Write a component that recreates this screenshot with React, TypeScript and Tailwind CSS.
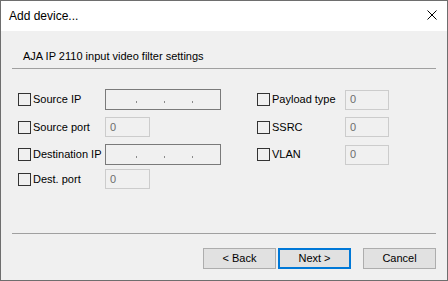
import React from "react";

function Check({ label }: { label: string }) {
  return (
    <div className="flex items-center">
      <div className="w-[13px] h-[13px] border border-[#333333] bg-[#f0f0f0] shrink-0" />
      <span className="ml-[2px] text-[11px] leading-[13px] text-black whitespace-nowrap">{label}</span>
    </div>
  );
}

function NumBox({ w, h = 20 }: { w: number; h?: number }) {
  return (
    <div
      className={`border border-[#cccccc] bg-[#f0f0f0] flex items-center pl-[4px] text-[11px] text-[#6d6d6d] ${
        w === 45 ? "w-[45px]" : "w-[44px]"
      } ${h === 20 ? "h-[20px]" : "h-[21px]"}`}
    >
      0
    </div>
  );
}

function IpBox() {
  return (
    <div className="w-[116px] h-[21px] border border-[#7a7a7a] bg-[#f0f0f0] flex items-start pt-[11px]">
      <div className="ml-[30px] w-px h-[2px] bg-[#8a8a8a]" />
      <div className="ml-[27px] w-px h-[2px] bg-[#8a8a8a]" />
      <div className="ml-[27px] w-px h-[2px] bg-[#8a8a8a]" />
    </div>
  );
}

function Btn({ label, primary }: { label: string; primary?: boolean }) {
  return (
    <div
      className={`w-[73px] h-[21px] bg-[#e1e1e1] flex items-center justify-center text-[11px] text-black ${
        primary ? "border-2 border-[#0078d7]" : "border border-[#adadad]"
      }`}
    >
      {label}
    </div>
  );
}

export default function App() {
  return (
    <div className="w-[448px] h-[281px] border border-[#6e6e6e] flex flex-col font-['Liberation_Sans',Arial,sans-serif] bg-[#f0f0f0] overflow-hidden">
      {/* Title bar */}
      <div className="h-[30px] bg-white flex items-start justify-between shrink-0">
        <span className="mt-[8px] ml-[8px] text-[12px] leading-[14px] text-black">Add device...</span>
        <svg className="mt-[9px] mr-[10px]" width="10" height="10" viewBox="0 0 10 10">
          <path d="M0.5 0.5 L9.5 9.5 M9.5 0.5 L0.5 9.5" stroke="#000" strokeWidth="1" fill="none" />
        </svg>
      </div>

      {/* Content */}
      <div className="flex-1 flex flex-col px-[11px]">
        <div className="h-[37px] pt-[19px] pl-[11px] text-[11px] leading-[13px] text-black">
          AJA IP 2110 input video filter settings
        </div>
        <div className="h-px bg-[#a0a0a0]" />

        <div className="flex flex-col pl-[6px] mt-[20px]">
          {/* Row 1 */}
          <div className="flex items-center h-[21px]">
            <div className="w-[87px]"><Check label="Source IP" /></div>
            <IpBox />
            <div className="ml-[36px] w-[88px]"><Check label="Payload type" /></div>
            <NumBox w={44} />
          </div>
          {/* Row 2 */}
          <div className="flex items-center h-[20px] mt-[7px]">
            <div className="w-[87px]"><Check label="Source port" /></div>
            <NumBox w={45} />
            <div className="ml-[107px] w-[88px]"><Check label="SSRC" /></div>
            <NumBox w={44} />
          </div>
          {/* Row 3 */}
          <div className="flex items-center h-[21px] mt-[7px]">
            <div className="w-[87px]"><Check label="Destination IP" /></div>
            <IpBox />
            <div className="ml-[36px] w-[88px]"><Check label="VLAN" /></div>
            <NumBox w={44} />
          </div>
          {/* Row 4 */}
          <div className="flex items-center h-[20px] mt-[4px]">
            <div className="w-[87px]"><Check label="Dest. port" /></div>
            <NumBox w={45} />
          </div>
        </div>

        <div className="flex-1" />
        <div className="h-px bg-[#a0a0a0]" />
        <div className="flex justify-end mt-[14px] mb-[11px]">
          <Btn label="< Back" />
          <div className="ml-[2px]"><Btn label="Next >" primary /></div>
          <div className="ml-[12px]"><Btn label="Cancel" /></div>
        </div>
      </div>
    </div>
  );
}
